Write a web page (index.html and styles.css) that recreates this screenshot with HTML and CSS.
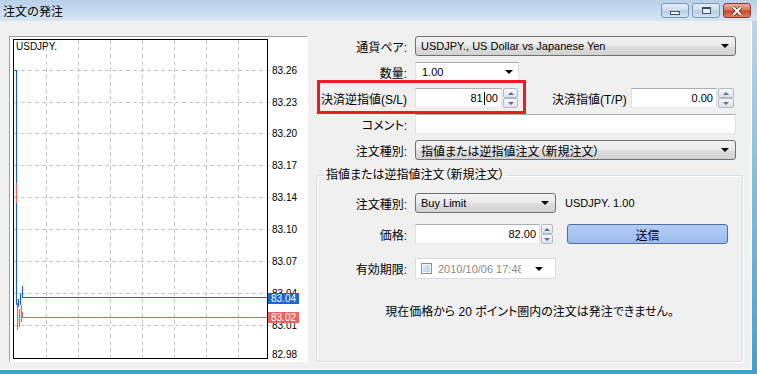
FILE: index.html
```html
<!DOCTYPE html>
<html lang="ja">

<head>
    <meta charset="UTF-8">
    <title>注文の発注</title>
    <link rel="stylesheet" href="styles.css">
</head>

<body>

    <div class="window">
        <div class="titlebar">
            <span class="title">注文の発注</span>
            <div class="caption-buttons">
                <span class="cap-btn"><i class="glyph-min"></i></span>
                <span class="cap-btn"><i class="glyph-max"></i></span>
                <span class="cap-btn close">
                    <svg width="12" height="10" viewBox="0 0 12 10">
                        <path d="M2 1 L10 9 M10 1 L2 9" stroke="#5b2016" stroke-width="3.4" />
                        <path d="M2 1 L10 9 M10 1 L2 9" stroke="#fff" stroke-width="2" />
                    </svg>
                </span>
            </div>
        </div>

        <div class="client">
            <!-- tick chart -->
            <div class="chart-frame">
                <svg class="chart" width="297" height="324" viewBox="0 0 297 324">
                    <g class="grid">
                        <path d="M36.5 3 V321 M68.5 3 V321 M100.5 3 V321 M132.5 3 V321 M164.5 3 V321 M196.5 3 V321 M228.5 3 V321" />
                        <path d="M4 33.5 H262 M4 65.5 H262 M4 96.5 H262 M4 128.5 H262 M4 160.5 H262 M4 192.5 H262 M4 224.5 H262 M4 256.5 H262 M4 288.5 H262" />
                    </g>
                    <rect x="3.5" y="2.5" width="254" height="319" fill="none" stroke="#000" />
                    <text x="6" y="13" class="sym">USDJPY.</text>
                    <g class="axis">
                        <text x="262" y="37">83.26</text>
                        <text x="262" y="69">83.23</text>
                        <text x="262" y="100">83.20</text>
                        <text x="262" y="132">83.17</text>
                        <text x="262" y="164">83.14</text>
                        <text x="262" y="196">83.10</text>
                        <text x="262" y="228">83.07</text>
                        <text x="262" y="260">83.04</text>
                        <text x="262" y="292">83.01</text>
                        <text x="262" y="321">82.98</text>
                    </g>
                    <path class="ask" d="M3 33.5 H6.5 V268 M8.5 262 V270 M10.5 256 V268 M12.5 249 V260.5 H257" />
                    <path class="bid" d="M6.5 146 V166 M7.5 266 V293 M9.5 272 V290 M11.5 268 V285 M12.5 275 V280.5 H257" />
                    <rect x="258" y="256" width="31" height="11" fill="#1666d8" />
                    <text x="261" y="265" class="tag">83.04</text>
                    <rect x="258" y="275" width="31" height="11" fill="#ee6464" />
                    <text x="261" y="284" class="tag">83.02</text>
                </svg>
            </div>

            <!-- order form -->
            <div class="form">
                <div class="row">
                    <label>通貨ペア:</label>
                    <div class="select wide">USDJPY., US Dollar vs Japanese Yen<span class="arrow"></span></div>
                </div>
                <div class="row">
                    <label>数量:</label>
                    <div class="field combo">1.00<span class="arrow"></span></div>
                </div>
                <div class="row">
                    <label>決済逆指値(S/L)</label>
                    <div class="field num sl">81<span class="caret"></span>00</div>
                    <div class="spin"><span class="up"></span><span class="down"></span></div>
                    <span class="tp-label">決済指値(T/P)</span>
                    <div class="field num tp">0.00</div>
                    <div class="spin tp-spin"><span class="up"></span><span class="down"></span></div>
                </div>
                <div class="row">
                    <label>コメント:</label>
                    <div class="field wide"></div>
                </div>
                <div class="row">
                    <label>注文種別:</label>
                    <div class="select wide ja">指値または逆指値注文（新規注文）<span class="arrow"></span></div>
                </div>

                <fieldset class="group">
                    <legend>指値または逆指値注文（新規注文）</legend>
                    <div class="row">
                        <label>注文種別:</label>
                        <div class="select short">Buy Limit<span class="arrow"></span></div>
                        <span class="info">USDJPY. 1.00</span>
                    </div>
                    <div class="row price-row">
                        <label>価格:</label>
                        <div class="field num price">82.00</div>
                        <div class="spin narrow"><span class="up"></span><span class="down"></span></div>
                        <button class="send">送信</button>
                    </div>
                    <div class="row date-row">
                        <label>有効期限:</label>
                        <div class="field date">
                            <span class="check"></span>
                            <span class="date-text">2010/10/06 17:48</span>
                            <span class="arrow"></span>
                        </div>
                    </div>
                    <p class="notice">現在価格から 20 ポイント圏内の注文は発注できません。</p>
                </fieldset>

                <div class="sl-highlight"></div>
            </div>
        </div>
    </div>

</body>

</html>
```

FILE: styles.css
```css
* {
    box-sizing: border-box;
}

body {
    margin: 0;
    font-family: "Liberation Sans", "Noto Sans CJK JP", sans-serif;
    font-size: 11px;
    color: #000;
    background: #f0f0f0;
}

.window {
    width: 757px;
    height: 374px;
    display: flex;
    flex-direction: column;
    overflow: hidden;
    background: linear-gradient(#c4d9ee, #3fa2cc);
}

/* title bar */
.titlebar {
    height: 21px;
    flex: none;
    display: flex;
    justify-content: space-between;
    padding: 0 6px 0 3px;
    background: linear-gradient(#b9d0e9, #d7e5f3);
}

.title {
    font-family: "Noto Sans CJK JP", sans-serif;
    font-size: 12px;
    line-height: 21px;
}

.caption-buttons {
    display: flex;
    gap: 3px;
    padding-top: 3px;
}

.cap-btn {
    width: 28px;
    height: 15px;
    border: 1px solid #7f98b6;
    border-radius: 3px;
    background: linear-gradient(#e6eef8, #cddcee 48%, #b8cce3 52%, #d3e2f2);
    display: flex;
    align-items: center;
    justify-content: center;
}

.cap-btn.close {
    border-color: #8a3b2d;
    background: linear-gradient(#eeb1a4, #d7705b 48%, #c5462a 52%, #dc7c63);
}

.glyph-min {
    width: 10px;
    height: 4px;
    margin-top: 4px;
    border: 1px solid #38506e;
    background: #fff;
}

.glyph-max {
    width: 9px;
    height: 7px;
    border: 1px solid #38506e;
    border-top-width: 2px;
    background: #eaf1f8;
}

/* client area */
.client {
    flex: 1;
    display: flex;
    gap: 8px;
    margin: 0 5px 4px 0;
    padding: 15px 0 7px 9px;
    background: #f0f0f0;
    border-right: 1px solid #fff;
    border-bottom: 1px solid #fff;
}

.chart-frame {
    width: 299px;
    flex: none;
    background: #fff;
    border: 1px solid;
    border-color: #a0a0a0 #fff #fff #a0a0a0;
}

.chart {
    display: block;
}

.grid path {
    stroke: #c6c6c6;
    stroke-dasharray: 4 3;
    fill: none;
}

.chart text {
    font-family: "Liberation Sans", sans-serif;
    font-size: 10px;
}

.ask {
    fill: none;
    stroke: #1c5fc9;
    stroke-width: 1.2;
}

.bid {
    fill: none;
    stroke: #e06464;
    stroke-width: 1.2;
}

.chart .tag {
    fill: #fff;
}

/* form */
.form {
    width: 427px;
    display: flex;
    flex-direction: column;
    gap: 6px;
    position: relative;
}

.row {
    display: flex;
    align-items: center;
    height: 20px;
    flex: none;
}

/* japanese captions a touch larger, kana set proportionally */
.row label,
.tp-label,
.group legend,
.notice,
.ja,
.send {
    font-size: 12px;
    font-feature-settings: "palt";
}

.row label {
    width: 91px;
    flex: none;
    margin-right: 8px;
    text-align: right;
    white-space: nowrap;
}

.group .row label {
    width: 90px;
}

.field {
    height: 20px;
    background: #fff;
    border: 1px solid;
    border-color: #abadb3 #dbdfe6 #e3e9ef #e2e3ea;
    padding: 0 4px;
    line-height: 18px;
    display: flex;
    align-items: center;
    white-space: nowrap;
}

.wide {
    width: 321px;
}

.select {
    height: 20px;
    display: flex;
    align-items: center;
    justify-content: space-between;
    padding: 0 6px 0 5px;
    border: 1px solid #707070;
    border-radius: 3px;
    background: linear-gradient(#f3f3f3, #ebebeb 45%, #dddddd 55%, #d2d2d2);
    white-space: nowrap;
}

.arrow {
    width: 0;
    height: 0;
    border-left: 4px solid transparent;
    border-right: 4px solid transparent;
    border-top: 4px solid #000;
}

.combo {
    width: 104px;
    padding-left: 6px;
    justify-content: space-between;
    padding-right: 5px;
}

.num {
    justify-content: flex-end;
    padding-right: 3px;
}

.sl {
    width: 87px;
}

.caret {
    width: 1px;
    height: 13px;
    background: #000;
    margin: 0 1px;
}

.spin {
    width: 15px;
    height: 20px;
    margin-left: 1px;
    display: flex;
    flex-direction: column;
}

.spin span {
    flex: 1;
    border: 1px solid #b4bac3;
    border-radius: 2px;
    background: linear-gradient(#f7f8fa, #dde3ea);
    display: flex;
    align-items: center;
    justify-content: center;
}

.spin .up::after {
    content: "";
    border-left: 3px solid transparent;
    border-right: 3px solid transparent;
    border-bottom: 3px solid #5b6e8f;
}

.spin .down::after {
    content: "";
    border-left: 3px solid transparent;
    border-right: 3px solid transparent;
    border-top: 3px solid #5b6e8f;
}

.tp-label {
    margin-left: 34px;
    width: 73px;
    white-space: nowrap;
}

.tp {
    width: 86px;
    margin-left: 6px;
}

.tp-spin {
    width: 16px;
}

.sl-highlight {
    position: absolute;
    left: 1px;
    top: 44px;
    width: 209px;
    height: 34px;
    border: 3px solid #ea1c24;
}

/* group box */
.group {
    flex: 1;
    margin: 1px 0 0;
    padding: 10px 0 0;
    min-width: 0;
    border: 1px solid #d5dfe5;
    border-radius: 3px;
    box-shadow: inset 1px 1px 0 #fff, 1px 1px 0 #fff;
}

.group legend {
    margin-left: 7px;
    padding: 0 2px;
    line-height: 16px;
}

.short {
    width: 141px;
}

.info {
    margin-left: 9px;
}

.price-row {
    margin-top: 11px;
}

.price {
    width: 125px;
}

.narrow {
    width: 12px;
}

.send {
    margin-left: 14px;
    width: 161px;
    height: 20px;
    padding: 0;
    font-family: inherit;
    border: 1px solid #4f6f9c;
    border-radius: 3px;
    background: linear-gradient(#b4cdf5, #9cbbee);
    color: #000;
}

.date-row {
    margin-top: 14px;
    height: 21px;
}

.date {
    width: 141px;
    height: 21px;
    padding: 0 12px 0 5px;
    border-color: #d9dde3;
}

.check {
    width: 11px;
    height: 11px;
    flex: none;
    border: 1px solid #8e9194;
    background: linear-gradient(135deg, #dde9f5, #b7d0ea);
    box-shadow: inset 0 0 0 1px #f4f8fc;
}

.date-text {
    width: 83px;
    margin-left: 6px;
    overflow: hidden;
    color: #8a8a8a;
}

.date .arrow {
    margin-left: auto;
}

.notice {
    margin: 26px 0 0;
    text-align: center;
    line-height: 14px;
}
```
